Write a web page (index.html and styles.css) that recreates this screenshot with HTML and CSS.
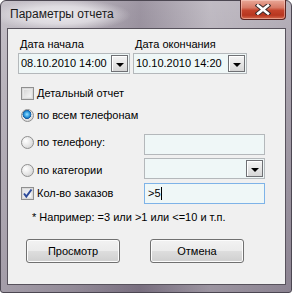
FILE: index.html
```html
<!DOCTYPE html>
<html lang="ru">
<head>
<meta charset="utf-8">
<title>Параметры отчета</title>
<link rel="stylesheet" href="styles.css">
</head>
<body>
<div class="window">
  <div class="titlebar">
    <span class="title">Параметры отчета</span>
    <div class="close">
      <svg width="16" height="11" viewBox="0 0 16 11">
        <path d="M3 1.5 L13 9.5 M13 1.5 L3 9.5" stroke="#3b2a2a" stroke-width="4.6" stroke-linecap="square" fill="none"/>
        <path d="M3 1.5 L13 9.5 M13 1.5 L3 9.5" stroke="#ffffff" stroke-width="2.6" stroke-linecap="square" fill="none"/>
      </svg>
    </div>
  </div>
  <div class="client">
    <div class="dates">
      <div class="date-col">
        <div class="label">Дата начала</div>
        <div class="field combo"><span class="value">08.10.2010 14:00</span><span class="drop"><i class="arrow"></i></span></div>
      </div>
      <div class="date-col wide">
        <div class="label">Дата окончания</div>
        <div class="field combo"><span class="value">10.10.2010 14:20</span><span class="drop"><i class="arrow"></i></span></div>
      </div>
    </div>
    <div class="options">
      <div class="row r1">
        <div class="opt"><span class="check"></span>Детальный отчет</div>
      </div>
      <div class="row r2">
        <div class="opt"><span class="radio on"></span>по всем телефонам</div>
      </div>
      <div class="row r3">
        <div class="opt"><span class="radio"></span>по телефону:</div>
        <div class="field input"></div>
      </div>
      <div class="row r4">
        <div class="opt"><span class="radio"></span>по категории</div>
        <div class="field combo"><span class="value"></span><span class="drop"><i class="arrow"></i></span></div>
      </div>
      <div class="row r5">
        <div class="opt"><span class="check on"><svg width="11" height="11" viewBox="0 0 11 11"><path d="M2 5.5 L4.3 8.5 L9.5 1.5" stroke="#2c4a9a" stroke-width="2" fill="none"/></svg></span>Кол-во заказов</div>
        <div class="field input focus"><span class="value">&gt;5</span><span class="caret"></span></div>
      </div>
    </div>
    <div class="hint">* Например: =3 или &gt;1 или &lt;=10 и т.п.</div>
    <div class="buttons">
      <div class="btn">Просмотр</div>
      <div class="btn">Отмена</div>
    </div>
  </div>
</div>
</body>
</html>
```
FILE: styles.css
```css
html, body {
  margin: 0;
  padding: 0;
  background: #ffffff;
}

.window {
  box-sizing: border-box;
  width: 292px;
  height: 293px;
  border: 1px solid #4c4752;
  border-radius: 6px 6px 3px 3px;
  padding: 0 5px 7px 6px;
  display: flex;
  flex-direction: column;
  background:
    radial-gradient(ellipse 70px 16px at 60px 14px, rgba(236,234,238,0.95) 0%, rgba(236,234,238,0.7) 55%, rgba(236,234,238,0) 100%),
    linear-gradient(90deg, rgba(255,255,255,0.25) 0%, rgba(255,255,255,0.1) 25%, rgba(60,45,70,0.18) 48%, rgba(255,255,255,0.18) 72%, rgba(255,255,255,0.05) 100%),
    linear-gradient(180deg, #b3adb7 0%, #a29ba6 30%, #857c8b 100%);
  font-family: "Liberation Sans", Arial, sans-serif;
  font-size: 11px;
  color: #000;
}

.titlebar {
  height: 27px;
  display: flex;
  align-items: flex-start;
  flex-shrink: 0;
}

.title {
  margin: 6px 0 0 3px;
  font-family: "Liberation Sans", Arial, sans-serif;
  font-size: 12px;
  line-height: 15px;
  color: #1a1a1a;
}

.close {
  margin: -1px 0 0 auto;
  width: 44px;
  height: 19px;
  border: 1px solid #5b2420;
  border-top: none;
  border-radius: 0 0 4px 4px;
  background: linear-gradient(180deg, #e9a898 0%, #d77a66 40%, #c4432b 55%, #b8361f 80%, #d46a4e 100%);
  box-shadow: inset 0 0 0 1px rgba(255,220,210,0.45);
  display: flex;
  align-items: center;
  justify-content: center;
}

.client {
  flex: 1;
  box-sizing: border-box;
  border: 1px solid #57525c;
  background: #f0f0f0;
  display: flex;
  flex-direction: column;
}

.dates {
  display: flex;
  gap: 3px;
  margin: 9px 0 0 10px;
}

.date-col {
  width: 112px;
  display: flex;
  flex-direction: column;
}

.date-col.wide {
  width: 114px;
}

.label {
  height: 13px;
  line-height: 13px;
  margin: 0 0 2px 2px;
  white-space: nowrap;
}

.field {
  box-sizing: border-box;
  height: 21px;
  border: 1px solid #b4b8bb;
  background: #eff7f7;
  display: flex;
  align-items: center;
}

.field .value {
  flex: 1;
  padding-left: 2px;
  line-height: 13px;
  white-space: nowrap;
}

.drop {
  width: 17px;
  height: 17px;
  margin-right: 1px;
  box-sizing: border-box;
  border: 1px solid #6f7074;
  background: linear-gradient(180deg, #f4f4f4 0%, #e6e6e6 50%, #d6d6d6 100%);
  box-shadow: inset 1px 1px 0 #ffffff;
  display: flex;
  align-items: center;
  justify-content: center;
}

.arrow {
  width: 0;
  height: 0;
  border-left: 4px solid transparent;
  border-right: 4px solid transparent;
  border-top: 4px solid #000;
  margin-top: 2px;
}

.options {
  margin: 13px 0 0 13px;
  display: flex;
  flex-direction: column;
}

.row {
  display: flex;
  align-items: flex-start;
}

.row.r2 { margin-top: 9px; }
.row.r3 { margin-top: 12px; }
.row.r4 { margin-top: 3px; }
.row.r5 { margin-top: 4px; }

.r3 .opt { margin-top: 2px; }
.r4 .opt { margin-top: 6px; }
.r5 .opt { margin-top: 4px; }

.opt {
  width: 123px;
  height: 13px;
  line-height: 13px;
  display: flex;
  align-items: center;
  gap: 3px;
  white-space: nowrap;
}

.row .field {
  width: 121px;
}

.check {
  box-sizing: border-box;
  width: 13px;
  height: 13px;
  border: 1px solid #8f8f8f;
  box-shadow: inset 0 0 0 1px #dadada, inset 0 0 0 2px #e8e8e8;
  display: flex;
  align-items: center;
  justify-content: center;
  background: linear-gradient(135deg, #cfcfcf 0%, #f4f4f4 80%);
}

.check.on {
  background: linear-gradient(135deg, #d8dde6 0%, #f6f7fa 80%);
}

.check svg {
  display: block;
}

.radio {
  box-sizing: border-box;
  width: 13px;
  height: 13px;
  border-radius: 50%;
  border: 1px solid #8f8f8f;
  background: radial-gradient(circle at 35% 35%, #ffffff 0%, #e4e4e4 55%, #c8c8c8 100%);
}

.radio.on {
  background:
    radial-gradient(circle at 45% 40%, #9fe0ff 0%, #2c9be0 30%, #13539a 48%, rgba(19,83,154,0) 52%),
    radial-gradient(circle at 35% 35%, #ffffff 0%, #e4e4e4 55%, #c8c8c8 100%);
}

.field.focus {
  border-color: #7eb3e8;
}

.field.focus .value {
  flex: 0 0 auto;
  padding-left: 3px;
}

.caret {
  width: 1px;
  height: 13px;
  background: #000;
}

.hint {
  margin: 7px 0 0 24px;
  height: 13px;
  line-height: 13px;
  white-space: nowrap;
}

.buttons {
  display: flex;
  gap: 30px;
  margin: 15px 0 0 18px;
}

.btn {
  box-sizing: border-box;
  width: 94px;
  height: 24px;
  border: 1px solid #707070;
  border-radius: 3px;
  background: linear-gradient(180deg, #f2f2f2 0%, #ebebeb 48%, #dddddd 52%, #cfcfcf 100%);
  box-shadow: inset 0 0 0 1px #fcfcfc;
  display: flex;
  align-items: center;
  justify-content: center;
  line-height: 13px;
}
```
